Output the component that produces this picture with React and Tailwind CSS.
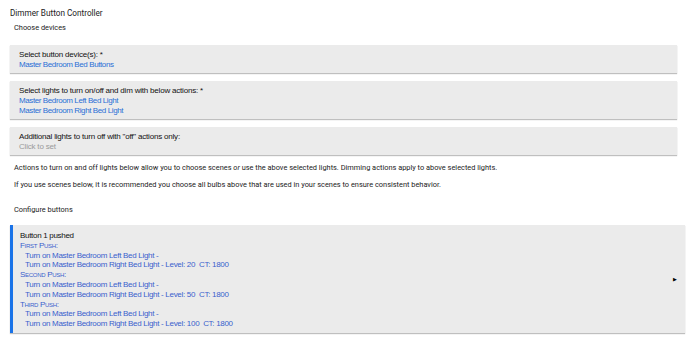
import React from "react";

const label = "font-['Liberation_Sans',sans-serif] text-[8px] leading-[10px] tracking-[-0.2px]";
const row = "font-['Liberation_Sans',sans-serif] text-[8px] leading-[9.8px] tracking-[-0.3px]";

const Field = ({ title, children }) => (
  <div className="ml-[10px] w-[667px] bg-[#ebebeb] px-[9px] pt-[5px] pb-[3px] shadow-[0_1px_1px_rgba(0,0,0,0.25)]">
    <div className={`${label} text-[#111]`}>{title}</div>
    {children}
  </div>
);

const Link = ({ children }) => (
  <div className={`${label} tracking-[-0.4px] text-[#2a6fd6]`}>{children}</div>
);

const Push = ({ name, level }) => (
  <>
    <div className={`${row} text-[#3a5fcd] [font-variant:small-caps]`}>{name}:</div>
    <div className={`${row} text-[#3a5fcd] pl-[5px]`}>Turn on Master Bedroom Left Bed Light -</div>
    <div className={`${row} text-[#3a5fcd] pl-[5px]`}>
      Turn on Master Bedroom Right Bed Light - Level: {level}&nbsp; CT: 1800
    </div>
  </>
);

const App = () => {
  return (
    <div className="w-[690px] h-[337px] overflow-hidden bg-white font-['Roboto',sans-serif] text-[#222]">
      <div className="pl-[10px] pt-[7px] text-[8.2px] leading-[12px]">Dimmer Button Controller</div>
      <div className="pl-[14px] mt-[3px] text-[7.4px] leading-[12px]">Choose devices</div>

      <div className="mt-[11px] flex flex-col gap-[8px]">
        <Field title="Select button device(s): *">
          <Link>Master Bedroom Bed Buttons</Link>
        </Field>
        <Field title="Select lights to turn on/off and dim with below actions: *">
          <Link>Master Bedroom Left Bed Light</Link>
          <Link>Master Bedroom Right Bed Light</Link>
        </Field>
        <Field title={'Additional lights to turn off with "off" actions only:'}>
          <div className={`${label} text-[#9a9a9a]`}>Click to set</div>
        </Field>
      </div>

      <div className="pl-[14px] mt-[7px] text-[7.4px] leading-[12px]">
        Actions to turn on and off lights below allow you to choose scenes <i>or</i> use the above selected lights. Dimming actions apply to above selected lights.
      </div>
      <div className="pl-[14px] mt-[5px] text-[7.4px] leading-[12px]">
        If you use scenes below, it is recommended you choose all bulbs above that are used in your scenes to ensure consistent behavior.
      </div>
      <div className="pl-[14px] mt-[13px] text-[7.4px] leading-[12px]">Configure buttons</div>

      <div className="relative mt-[9px] ml-[10px] w-[675px] bg-[#ebebeb] border-l-[3px] border-[#1a73e8] pl-[7px] pt-[6px] pb-[4px] shadow-[0_1px_1px_rgba(0,0,0,0.25)]">
        <div className={`${row} text-[#111]`}>Button 1 pushed</div>
        <Push name="First Push" level="20" />
        <Push name="Second Push" level="50" />
        <Push name="Third Push" level="100" />
        <div className="absolute right-[8px] top-1/2 -translate-y-1/2 text-[5px] leading-none text-black">▶</div>
      </div>
    </div>
  );
};

export default App;
